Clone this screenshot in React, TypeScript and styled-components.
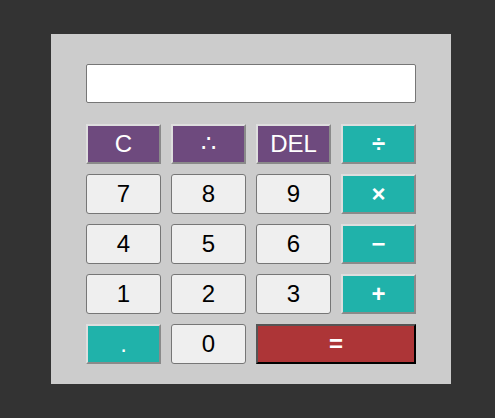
import React from "react";
import styled, { createGlobalStyle, css } from "styled-components";

const Global = createGlobalStyle`
  html, body { margin: 0; padding: 0; background: #333333; }
  body { font-family: "Liberation Sans", Arial, sans-serif; }
`;

const Page = styled.div`
  padding: 34px 0 0 51px;
  min-height: 418px;
  box-sizing: border-box;
`;

const Panel = styled.div`
  width: 400px;
  height: 350px;
  box-sizing: border-box;
  background: #cccccc;
  padding: 30px 35px 20px;
  display: flex;
  flex-direction: column;
  gap: 21px;
`;

const Display = styled.input`
  width: 330px;
  height: 39px;
  box-sizing: border-box;
  border: 1px solid #767676;
  border-radius: 2px;
  background: #ffffff;
  margin: 0;
  padding: 0 6px;
  font: 24px "Liberation Sans", Arial, sans-serif;
`;

const Keys = styled.div`
  display: grid;
  grid-template-columns: repeat(4, 75px);
  grid-auto-rows: 40px;
  gap: 10px;
`;

type Kind = "fn" | "num" | "op" | "eq";

const kinds = {
  fn: css`
    background: #6e4a7e;
    color: #ffffff;
    border-style: solid;
    border-width: 2px;
    border-color: #dedede #8a8a8a #8a8a8a #dedede;
  `,
  op: css`
    background: #20b2aa;
    color: #ffffff;
    border-style: solid;
    border-width: 2px;
    border-color: #dedede #8a8a8a #8a8a8a #dedede;
  `,
  num: css`
    background: #efefef;
    color: #000000;
    border: 1px solid #767676;
    border-radius: 3px;
  `,
  eq: css`
    background: #ad3537;
    color: #ffffff;
    border-style: solid;
    border-width: 2px;
    border-color: #555555 #000000 #000000 #555555;
    grid-column: span 2;
  `,
};

const Key = styled.button<{ $kind: Kind; $bold?: boolean }>`
  box-sizing: border-box;
  margin: 0;
  padding: 0;
  width: 100%;
  height: 40px;
  font-family: "Liberation Sans", Arial, sans-serif;
  font-size: 24px;
  font-weight: ${(p) => (p.$bold ? 700 : 400)};
  line-height: 1;
  display: flex;
  align-items: center;
  justify-content: center;
  ${(p) => kinds[p.$kind]}
`;

const keys: { label: string; kind: Kind; bold?: boolean }[] = [
  { label: "C", kind: "fn" },
  { label: "∴", kind: "fn" },
  { label: "DEL", kind: "fn" },
  { label: "÷", kind: "op", bold: true },
  { label: "7", kind: "num" },
  { label: "8", kind: "num" },
  { label: "9", kind: "num" },
  { label: "×", kind: "op", bold: true },
  { label: "4", kind: "num" },
  { label: "5", kind: "num" },
  { label: "6", kind: "num" },
  { label: "−", kind: "op", bold: true },
  { label: "1", kind: "num" },
  { label: "2", kind: "num" },
  { label: "3", kind: "num" },
  { label: "+", kind: "op", bold: true },
  { label: ".", kind: "op" },
  { label: "0", kind: "num" },
  { label: "=", kind: "eq", bold: true },
];

export default function App() {
  return (
    <>
      <Global />
      <Page>
        <Panel>
          <Display readOnly value="" />
          <Keys>
            {keys.map((k, i) => (
              <Key key={i} $kind={k.kind} $bold={k.bold}>
                {k.label}
              </Key>
            ))}
          </Keys>
        </Panel>
      </Page>
    </>
  );
}
